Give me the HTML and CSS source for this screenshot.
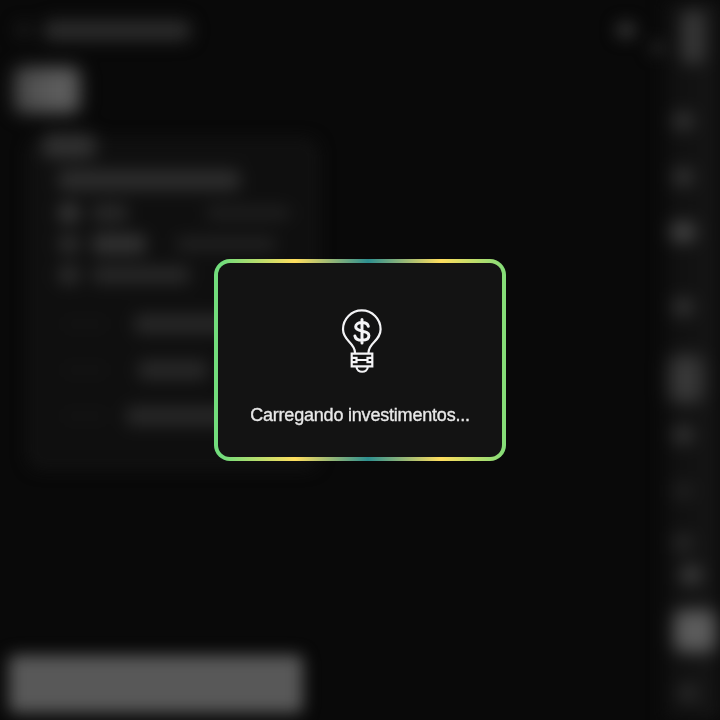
FILE: index.html
```html
<!DOCTYPE html>
<html lang="pt-BR">
<head>
<meta charset="utf-8">
<title>Investimentos</title>
<link rel="stylesheet" href="styles.css">
</head>
<body>
<div class="page" aria-hidden="true">
  <main class="main">
    <header class="topbar"><i class="bar back"></i><i class="bar title"></i><i class="dot action"></i><i class="dot small"></i></header>
    <div class="chip"></div>
    <section class="panel">
      <div class="tag"></div>
      <div class="bar heading"></div>
      <div class="row r1"><i class="ico"></i><i class="bar a"></i><i class="bar b"></i></div>
      <div class="row r2"><i class="ico"></i><i class="bar a"></i><i class="bar b"></i></div>
      <div class="row r3"><i class="ico"></i><i class="bar a"></i></div>
      <div class="stat s1"><i class="bar k"></i><i class="bar v"></i></div>
      <div class="stat s2"><i class="bar k"></i><i class="bar v"></i></div>
      <div class="stat s3"><i class="bar k"></i><i class="bar v"></i></div>
    </section>
    <div class="cta"></div>
  </main>
  <aside class="side">
    <i class="logo"></i>
    <i class="nav n1"></i><i class="nav n2"></i><i class="nav n3"></i><i class="nav n4"></i>
    <i class="nav active"></i>
    <i class="nav n5"></i><i class="nav n6"></i><i class="nav n7"></i><i class="nav n8"></i>
    <i class="nav user"></i><i class="nav n9"></i>
  </aside>
</div>
<div class="overlay">
  <div class="loader" role="status">
    <svg class="bulb" width="64" height="80" viewBox="0 0 64 80" fill="none" stroke="#f4f4f6" stroke-width="2.200" stroke-linecap="round" stroke-linejoin="round">
      <path d="M25 52.500C25 42.500 13 41 13 29.200a18.800 18.800 0 0 1 37.600 0C50.600 41 38.500 42.500 38.500 52.500"/>
      <path stroke-width="3" d="M38.300 26.300c-.5-2.400-2.800-3.800-6.300-3.800-3.600 0-6.300 1.700-6.300 4.300 0 5.900 13.200 2.700 13.200 8.800 0 3-2.800 4.700-6.900 4.700-3.900 0-6.600-1.600-7.100-4.300M32 19.500v23.500"/>
      <path stroke-linejoin="miter" d="M21.700 53.700h20.600v12.600H21.700zM21.700 57.800h4.800v4.400h-4.800M42.300 57.800h-4.800v4.400h4.800M26.500 60h11M26.500 67c.5 6.300 10.800 6.300 11.300 0"/>
    </svg>
    <p class="message">Carregando investimentos...</p>
  </div>
</div>
</body>
</html>
```
FILE: styles.css
```css
* { box-sizing: border-box; }
body { margin: 0; background: #090909; overflow: hidden; font-family: "Liberation Sans", Arial, sans-serif; }
i { display: block; flex: none; }

.page { display: flex; width: 720px; height: 720px; filter: blur(8px); }
.main { width: 664px; display: flex; flex-direction: column; }
.topbar { display: flex; align-items: center; height: 60px; padding: 0 0 0 16px; }
.bar { height: 14px; border-radius: 5px; background: #282828; }
.back { width: 16px; background: #1a1a1a; }
.title { width: 146px; height: 19px; margin-left: 12px; background: #2e2e2e; filter: blur(3px); }
.dot.action { width: 20px; height: 16px; margin: 0 0 0 auto; background: #343434; border-radius: 8px; }
.dot.small { width: 14px; height: 14px; margin: 36px 0 0 14px; background: #262626; border-radius: 7px; }
.chip { width: 66px; height: 46px; margin: 7px 0 0 14px; border-radius: 8px; background: linear-gradient(90deg, #464646, #5c5c5c 60%); filter: blur(4px); }
.panel { width: 290px; height: 330px; margin: 26px 0 0 28px; padding: 0 26px; border: 8px solid #131313; border-radius: 14px; background: #0f0f0f; }
.tag { width: 54px; height: 24px; margin: -13px 0 0 -20px; border-radius: 8px; background: #323232; filter: blur(3px); }
.heading { width: 182px; height: 20px; margin: 12px 0 0 -4px; background: #2f2f2f; filter: blur(3px); }
.row { display: flex; height: 20px; align-items: center; margin: 11px 0 0 -4px; filter: blur(2px); }
.r1 { margin-top: 13px; }
.row .ico { width: 22px; height: 20px; border-radius: 7px; background: #343434; }
.row .a { width: 36px; margin-left: 12px; height: 18px; }
.row .b { width: 84px; margin-left: 78px; background: #1f1f1f; }
.r2 .a { width: 54px; height: 20px; background: #323232; }
.r2 .b { width: 100px; margin-left: 30px; background: #222; }
.r2 .ico, .r3 .ico { background: #2a2a2a; }
.r3 .a { width: 98px; }
.stat { display: flex; align-items: center; justify-content: space-between; width: 200px; height: 20px; margin-top: 26px; filter: blur(2px); }
.s1 { margin-top: 29px; }
.stat .k { width: 46px; background: #141414; height: 10px; }
.stat .v { width: 128px; height: 20px; background: #282828; }
.s2 .v { width: 70px; margin-right: 54px; }
.s3 .v { width: 136px; }
.cta { width: 294px; height: 58px; margin: auto 0 7px 9px; border-radius: 6px; background: #585858; }

.side { width: 56px; display: flex; flex-direction: column; align-items: flex-start; padding-left: 8px; background: linear-gradient(90deg, #0f0f0f, #151515); }
.logo { width: 24px; height: 54px; margin: 10px 0 0 9px; border-radius: 8px; background: #363636; filter: blur(3px); }
.nav { width: 22px; height: 20px; border-radius: 8px; background: #303030; filter: blur(3px); }
.n1 { margin-top: 47px; }
.n2 { margin-top: 36px; }
.n3 { margin-top: 34px; height: 22px; width: 26px; margin-left: -2px; background: #404040; }
.n4 { margin-top: 54px; }
.active { width: 34px; height: 48px; margin: 38px 0 0 -3px; background: #383838; filter: blur(5px); }
.n5 { margin-top: 22px; }
.n6 { margin-top: 36px; background: #1e1e1e; }
.n7 { margin-top: 32px; background: #252525; }
.n8 { margin: 12px 0 0 8px; background: #3a3a3a; }
.user { width: 42px; height: 42px; margin: 25px 0 0 2px; background: #5c5c5c; filter: blur(4px); }
.n9 { margin: 31px 0 0 5px; background: #262626; }

.overlay { position: fixed; inset: 0; display: flex; align-items: center; justify-content: center; }
.loader {
  width: 292px; height: 202px; padding: 37px 0 0; border: 4px solid transparent; border-radius: 16px;
  display: flex; flex-direction: column; align-items: center;
  background:
    linear-gradient(#131313, #131313) padding-box,
    linear-gradient(90deg, #72dd7c 8px, #ffde5e 81px, #2e9090 154px, #ffde5e 227px, #72dd7c 300px) border-box;
}
.bulb { display: block; margin-left: 4px; }
.message { margin: 25px 0 0; font-size: 18px; line-height: 21px; letter-spacing: -0.2px; color: #e8e8e8; -webkit-text-stroke: 0.35px #e8e8e8; white-space: nowrap; }
```
